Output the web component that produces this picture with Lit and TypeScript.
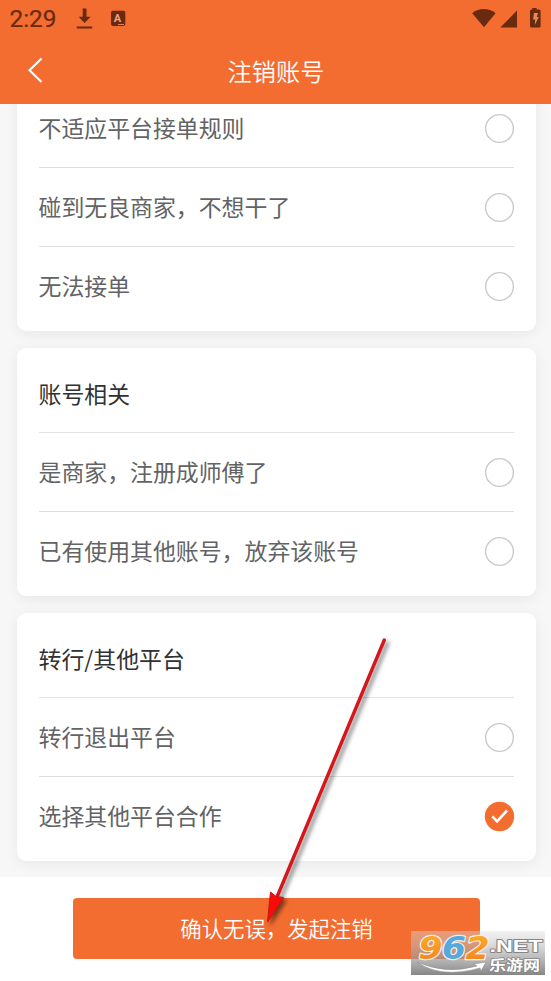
import { LitElement, html, svg, css } from "lit";
import { customElement, property } from "lit/decorators.js";

@customElement("status-bar")
class StatusBar extends LitElement {
  static styles = css`
    :host { display: flex; height: 38px; align-items: center; justify-content: space-between; }
    svg { display: block; }
    text { font-family: Roboto, sans-serif; font-size: 24px; font-weight: 400; stroke-width: 0.2px; stroke: #692a10; }
    .letter { font-size: 11px; font-weight: 700; stroke: none; }
  `;
  render() {
    return html`
      <svg width="140" height="38" fill="#692a10">
        <text x="9.5" y="27.2" textLength="47" lengthAdjust="spacingAndGlyphs">2:29</text>
        <path d="M82.7 8.5h3.8v8.2h4.1l-6 6.4-6-6.4h4.1zM76.8 26.6h15.4v2H76.8z" />
        <rect x="111" y="10.7" width="14.3" height="15.2" rx="1.8" />
        <text class="letter" x="113.7" y="22.3" fill="#f0a080">A</text>
        <path d="M118 24h6v1h-6z" fill="#d98560" />
      </svg>
      <svg width="90" height="38" fill="#692a10">
        <path d="M11.2 13.2c7-5.6 16.2-5.6 23.4 0L23 27.3z" />
        <path d="M56 10.6v17H39.3z" />
        <path d="M71.2 8h4.4v1.5H78q1.6 0 1.6 1.6v14.9q0 1.6-1.6 1.6h-7.4q-1.6 0-1.6-1.6V11.1q0-1.6 1.6-1.6h.6z" />
        <path d="M73 13h4l-1.2 4h2l-4 8 .4-5.4H72z" fill="#e3885f" />
      </svg>`;
  }
}

@customElement("reason-row")
class ReasonRow extends LitElement {
  @property() label = "";
  @property({ type: Boolean }) checked = false;
  static styles = css`
    :host { display: flex; height: 79px; box-sizing: border-box; align-items: center; justify-content: space-between; border-bottom: 1px solid #dedfe0; color: #626365; }
    :host(:last-of-type) { border-bottom-color: transparent; }
    .label { line-height: 34px; padding-bottom: 2px; }
    svg { display: block; margin: 0 -1px 0 0; }
  `;
  render() {
    return html`<span class="label">${this.label}</span>
      <svg width="31" height="31" viewBox="0 0 31 31">
        ${this.checked
          ? svg`<circle cx="15.5" cy="15.5" r="14.7" fill="#f36d31"/><path d="m8.3 15.4 4.8 4.9 9.9-10.8" fill="none" stroke="#fff" stroke-width="2.6"/>`
          : svg`<circle cx="15.5" cy="15.5" r="13.9" fill="#fff" stroke="#c8c9cc" stroke-width="1.4"/>`}
      </svg>`;
  }
}

@customElement("site-badge")
class SiteBadge extends LitElement {
  static styles = css`
    :host { display: block; }
    svg { display: block; overflow: visible; }
    text { paint-order: stroke; stroke-linejoin: round; line-height: 1; }
    .digits { font: italic 700 32px "DejaVu Sans", sans-serif; stroke: #f4f0ec; stroke-width: 2.4px; }
    .net { font: 700 17px "Liberation Sans", sans-serif; stroke: #858585; stroke-width: 1.8px; fill: #fff; }
    .cn { font: 700 14px "Noto Sans CJK SC", sans-serif; stroke: #858585; stroke-width: 1.6px; fill: #fff; }
  `;
  render() {
    return html`<svg width="134" height="44" viewBox="0 0 134 44">
      <defs>
        <linearGradient id="shade" x2="0" y2="1"><stop stop-color="#ddd" stop-opacity=".4"/><stop offset="1" stop-color="#707070" stop-opacity=".85"/></linearGradient>
        <linearGradient id="gold" x2="0" y2="1"><stop stop-color="#ffb229"/><stop offset="1" stop-color="#f27d20"/></linearGradient>
      </defs>
      <rect width="134" height="44" fill="url(#shade)"/>
      <g class="digits">
        <text x="7.5" y="27.6" textLength="24" lengthAdjust="spacingAndGlyphs" fill="url(#gold)">9</text>
        <text x="31" y="27.6" textLength="24" lengthAdjust="spacingAndGlyphs" fill="#57a9dc">6</text>
        <text x="54.5" y="27.6" textLength="24" lengthAdjust="spacingAndGlyphs" fill="url(#gold)">2</text>
      </g>
      <text class="net" x="78.5" y="21" textLength="53" lengthAdjust="spacingAndGlyphs">.NET</text>
      <path d="M6 31Q35 44 66 35l-3-2 12-2-5 9-1-3Q30 48 6 31z" fill="#fff" stroke="#909090" stroke-width=".6"/>
      <text class="cn" x="78" y="39.4" textLength="51" lengthAdjust="spacingAndGlyphs">乐游网</text>
    </svg>`;
  }
}

@customElement("app-root")
class AppRoot extends LitElement {
  static styles = css`
    :host { position: relative; display: flex; flex-direction: column; height: 981px; overflow: hidden; background: #fff; font-family: "Noto Sans CJK SC", sans-serif; font-size: 22.9px; }
    header { flex: none; height: 104px; background: #f36d31; color: #fff; }
    .nav { display: grid; grid-template-columns: 70px 1fr 70px; height: 66px; align-items: center; text-align: center; font-size: 24.2px; font-weight: 350; }
    .nav span { padding: 0 0 2px 1px; }
    .nav svg { display: block; justify-self: center; }
    main { flex: 1; min-height: 0; overflow: hidden; display: flex; flex-direction: column; justify-content: flex-end; gap: 17px; padding: 0 15px 16px 17px; background: #f7f7f7; }
    section { flex: none; box-sizing: border-box; background: #fff; border-radius: 9px; padding: 6px 22px 5px 21.5px; box-shadow: 0 3px 14px rgba(0, 0, 0, .065); }
    h2 { box-sizing: border-box; height: 79px; margin: 0; display: flex; align-items: center; padding-bottom: 1px; border-bottom: 1px solid #e3e3e3; color: #303133; font-size: inherit; font-weight: 400; }
    footer { flex: none; height: 104px; box-sizing: border-box; padding: 21px 71px 0 73px; background: #fff; }
    button { display: block; width: 100%; height: 61px; padding: 0 0 2px; border: 0; border-radius: 4px; background: #f36d31; color: #fff; font: 350 21.4px "Noto Sans CJK SC", sans-serif; }
    .pointer { position: absolute; left: 250px; top: 625px; pointer-events: none; filter: drop-shadow(3px 3px 2px rgba(0, 0, 0, .5)); }
    site-badge { position: absolute; left: 411px; top: 931px; }
  `;
  render() {
    return html`
      <header>
        <status-bar></status-bar>
        <div class="nav">
          <svg width="18" height="28" fill="none" stroke="#fff" stroke-width="2.1"><path d="M15.5 1.6 3.5 13.3l12 11.8"/></svg>
          <span>注销账号</span>
        </div>
      </header>
      <main>
        <section>
          <reason-row label="不适应平台接单规则"></reason-row>
          <reason-row label="碰到无良商家，不想干了"></reason-row>
          <reason-row label="无法接单"></reason-row>
        </section>
        <section>
          <h2>账号相关</h2>
          <reason-row label="是商家，注册成师傅了"></reason-row>
          <reason-row label="已有使用其他账号，放弃该账号"></reason-row>
        </section>
        <section>
          <h2>转行/其他平台</h2>
          <reason-row label="转行退出平台"></reason-row>
          <reason-row label="选择其他平台合作" checked></reason-row>
        </section>
      </main>
      <footer><button>确认无误，发起注销</button></footer>
      <svg class="pointer" width="150" height="310">
        <path d="M134.3 15 27 272" stroke="#d5161b" stroke-width="3.4" stroke-linecap="round"/>
        <path d="M17.5 297 20.5 267l5.5 4.5 7.5 1z" fill="#f80b08" stroke="#c91513" stroke-width="1"/>
      </svg>
      <site-badge></site-badge>`;
  }
}
